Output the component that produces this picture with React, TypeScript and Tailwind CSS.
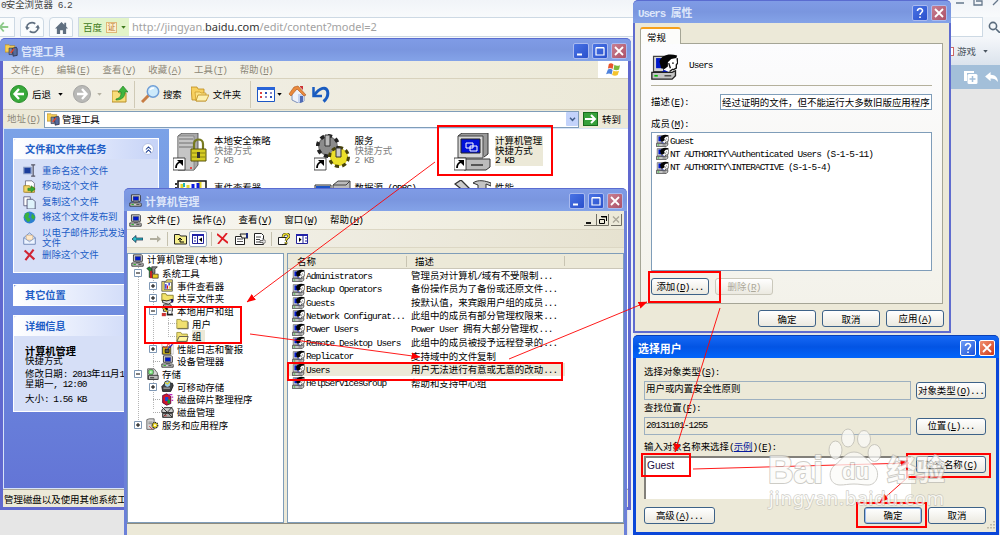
import React from "react";
import clsx from "clsx";

const CJK = "font-['Noto_Sans_CJK_SC',sans-serif]";

// Latin runs take half the width of a Chinese character, as in SimSun
function T({ s, k, className }: { s: string; k?: string; className?: string }) {
  const latin = "font-['Liberation_Mono','Noto_Sans_CJK_SC',monospace] tracking-[-0.1em]";
  return (
    <span className={clsx("whitespace-pre", className)}>
      {s.split(/([\u0020-\u00ff]+)/).map((p, i) =>
        i % 2 ? (
          <span key={i} className={latin}>
            {p}
          </span>
        ) : (
          p
        )
      )}
      {k && (
        <span className={latin}>
          (<u>{k}</u>)
        </span>
      )}
    </span>
  );
}

function Computer({ className }: { className?: string }) {
  return (
    <svg viewBox="0 0 16 16" className={className}>
      <path d="M3 1h10l1 1v7H3z" fill="#ddd" stroke="#222" strokeWidth="1" />
      <path d="M5 3h7v5H5z" fill="#0018c8" stroke="#555" strokeWidth=".6" />
      <path d="M6 9h5v2H6z" fill="#888" />
      <path d="M1 11h13l1 1v3H1z" fill="#ccc" stroke="#222" strokeWidth="1" />
      <path d="M3 13h3" stroke="#0a0" />
      <path d="M9 13h4" stroke="#333" />
    </svg>
  );
}

function Users({ className }: { className?: string }) {
  return (
    <svg viewBox="0 0 16 16" className={className}>
      <path d="M1.500 2h6v9h-6z" fill="#d5d5d5" stroke="#444" strokeWidth=".7" />
      <path d="M3 3h4v6H3z" fill="#0018c8" />
      <path d="M7 6l2-2 6-1 .5 3-1 3-2 .5L11 11H8z" fill="#fff" />
      <path d="M5 5c1-4 6-5 10.500-3.500L15 3l-3 .5-2 2v2.500L8 9.500 6 9z" fill="#050505" />
      <path d="M10.500 6l1 3M11 11l2-1.500M12.500 6h1M15.500 3l.3 3-.8 1v2l-2 1" stroke="#111" fill="none" strokeWidth=".8" />
      <path d="M5 12l3-2 4 2z" fill="#0018d0" />
      <path d="M.5 11.500h12l2-1v3l-2 2H.5z" fill="#c4c4c4" stroke="#222" strokeWidth=".8" />
      <path d="M2 13.500h2" stroke="#0b0" />
      <path d="M8 13.500h4" stroke="#444" strokeWidth=".8" />
    </svg>
  );
}

function Folder({ open, className }: { open?: boolean; className?: string }) {
  return (
    <svg viewBox="0 0 16 16" className={className}>
      <path d="M1 3h5l1 2h7v9H1z" fill="#f0e070" stroke="#9a9038" />
      {open ? (
        <path d="M4 8h11l-2 6H1z" fill="#fff6a0" stroke="#444" />
      ) : (
        <path d="M15 6v8.500H2" stroke="#444" strokeWidth=".9" fill="none" />
      )}
    </svg>
  );
}

function Mixed({ kind, className }: { kind: string; className?: string }) {
  return (
    <svg viewBox="0 0 16 16" className={className}>
      {kind === "tools" && (
        <>
          <path d="M1 3l3-2 3 2v11H4V6z" fill="#178a2a" stroke="#222" strokeWidth=".8" />
          <path d="M5 6h3v9H5z" fill="#c22" />
          <path d="M7 1h7l-3 3v5H8z" fill="#888" stroke="#111" strokeWidth=".8" />
          <path d="M8 10h7v5H8z" fill="#e6cc22" stroke="#222" strokeWidth=".8" />
        </>
      )}
      {kind === "event" && (
        <>
          <path d="M1 3h5l1-2h7v14H1z" fill="#f0df6a" stroke="#555" />
          <path d="M4 4h9v9H4z" fill="#fff" stroke="#222" strokeWidth=".7" />
          <path d="M6 6v6M10 5v3" stroke="#11c" strokeWidth="1.500" />
          <path d="M8 8v4" stroke="#d11" strokeWidth="1.500" />
          <path d="M11 9v3" stroke="#dc0" strokeWidth="1.500" />
        </>
      )}
      {kind === "share" && (
        <>
          <path d="M1 2h5l1 2h8v7H1z" fill="#f3e268" stroke="#7d7420" />
          <path d="M2 10l5 1 7-2v3l-5 3-7-2z" fill="#ddd" stroke="#111" />
          <path d="M12 9h3v4h-2z" fill="#116" />
        </>
      )}
      {kind === "local" && (
        <>
          <path d="M3 1h9l2 4v4H3z" fill="#ddd" stroke="#111" />
          <path d="M1 5l4-3 4 4-2 3z" fill="#111" />
          <path d="M2 4l8 8" stroke="#e8d020" strokeWidth="1.600" />
          <path d="M7 12c1-6 6-6 7-1l1 3H7z" fill="#222" />
          <path d="M9 8h4v4H9z" fill="#fff" />
          <path d="M1 11h5v4H1z" fill="#c33" />
        </>
      )}
      {kind === "perf" && (
        <>
          <path d="M1 2h14v13H1z" fill="#fff" stroke="#999" strokeWidth=".6" />
          <path d="M2 6h10v9H2z" fill="#e3c91c" stroke="#222" />
          <path d="M5 9h5v4H5z" fill="#555" stroke="#111" />
          <path d="M2 5l4 3 3-6 3 4 3-5" stroke="#d22" fill="none" />
          <path d="M8 9l6-6" stroke="#12c" strokeWidth="1.400" />
        </>
      )}
      {kind === "storage" && (
        <>
          <path d="M2 1h8l4 5v8H2z" fill="#d8d8d8" stroke="#555" />
          <circle cx="6" cy="5" r="3.500" fill="#7d7" stroke="#555" strokeWidth=".8" />
          <circle cx="6" cy="5" r="1" fill="#fff" />
          <path d="M3 9h12v5H3z" fill="#bbb" stroke="#222" />
          <path d="M5 12h5" stroke="#111" />
        </>
      )}
      {kind === "removable" && (
        <>
          <path d="M1 8l4-4h9l1 3-3 7H2z" fill="#444" stroke="#111" />
          <circle cx="8" cy="5" r="4" fill="#9ce" stroke="#222" />
          <path d="M5 3l3 2 3-3" stroke="#e3d020" strokeWidth="1.500" fill="none" />
          <path d="M3 10h8" stroke="#ddd" />
        </>
      )}
      {kind === "defrag" && (
        <>
          <path d="M2 3l5-2 5 3v9l-5 2-5-3z" fill="#d3152b" stroke="#503" />
          <path d="M5 5h4v5H5z" fill="#1747d8" />
          <path d="M8 8h3v5H8z" fill="#18a02a" />
          <path d="M11 2h3M13 5h2M13 9h2M10 1v2" stroke="#b2b" strokeWidth="1.500" />
        </>
      )}
      {kind === "disk" && (
        <>
          <path d="M1 5l3-3h9l2 3v3H1z" fill="#ccc" stroke="#111" />
          <path d="M2 9h12v5H2z" fill="#aaa" stroke="#111" />
          <path d="M1 1l13 13M14 1L3 13" stroke="#333" strokeWidth="1.200" />
          <path d="M4 12h3" stroke="#c22" />
        </>
      )}
      {kind === "service" && (
        <>
          <path d="M1 2l3-1h6v13H1z" fill="#d5d5d5" stroke="#555" />
          <path d="M3 5h5M3 7h5" stroke="#777" />
          <circle cx="11" cy="9" r="3.500" fill="#e8d41c" stroke="#222" strokeDasharray="1.500 .8" strokeWidth="1.500" />
          <circle cx="11" cy="9" r="1.200" fill="#fff" />
          <path d="M4 10l4 4" stroke="#c22" />
        </>
      )}
    </svg>
  );
}

function AdminIcon({ className }: { className?: string }) {
  return (
    <svg viewBox="0 0 16 16" className={className}>
      <path d="M0 1h5l1 1h6v8H0z" fill="#f6cf55" stroke="#a77c1c" strokeWidth=".7" />
      <path d="M5 5h4v8H5z" fill="#7b87a8" stroke="#334" strokeWidth=".8" />
      <path d="M9 5l5-1 1 2v8l-5 1z" fill="#556a9c" stroke="#223" strokeWidth=".8" />
      <path d="M7 11l4-5" stroke="#e5482c" strokeWidth="1.800" />
    </svg>
  );
}

function CaptionButton({ kind, active }: { kind: "min" | "max" | "help" | "close"; active?: boolean }) {
  return (
    <span
      className={clsx(
        "flex h-[16px] w-[16px] items-center justify-center rounded-[2px] border",
        active ? "border-white" : "border-[#a9baf0]",
        kind === "close"
          ? active
            ? "bg-linear-to-br from-[#f0906f] to-[#cf3510]"
            : "bg-linear-to-br from-[#c87f91] to-[#ac5168]"
          : active
            ? "bg-linear-to-br from-[#6f9cf5] to-[#1b50d8]"
            : "bg-linear-to-br from-[#4a73e4] to-[#2a50cc]"
      )}
    >
      <svg viewBox="0 0 14 14" className="h-[14px] w-[14px]" fill="none" stroke="#fff">
        {kind === "min" && <path d="M3 10.500h5" strokeWidth="2" />}
        {kind === "max" && <path d="M3 4h8v7H3zM3 3.500h8" strokeWidth="1.200" />}
        {kind === "close" && <path d="M3 3l8 8M11 3l-8 8" strokeWidth="1.800" />}
        {kind === "help" && (
          <path d="M4.500 5c0-3.500 5.300-3 5 0C9.300 6.500 7 6.700 7 9M7 10.500v1.500" strokeWidth="1.600" />
        )}
      </svg>
    </span>
  );
}

function TitleBar({
  title,
  icon,
  buttons,
  active,
}: {
  title: string;
  icon?: React.ReactNode;
  buttons: ("min" | "max" | "help" | "close")[];
  active?: boolean;
}) {
  return (
    <div
      className={clsx(
        "flex h-[23px] shrink-0 items-center rounded-t-[5px] border-t pt-px pr-[4px] pl-[5px]",
        active
          ? "border-[#0840b8] bg-linear-to-b from-[#1668f4] via-[#0354e4] to-[#0265fb]"
          : "border-[#5a6cd0] bg-linear-to-b from-[#7f9be6] via-[#7a96df] to-[#84a3e8]"
      )}
    >
      {icon}
      <T
        s={title}
        className={clsx("text-[10.900px] font-bold", active ? "text-white" : "text-[#dde6fa]")}
      />
      <div className="ml-auto flex gap-[3px]">
        {buttons.map((b) => (
          <CaptionButton key={b} kind={b} active={active} />
        ))}
      </div>
    </div>
  );
}

function Btn({ s, k, tail, className }: { s: string; k?: string; tail?: string; className?: string }) {
  return (
    <div
      className={clsx(
        "flex h-[17px] shrink-0 items-center justify-center rounded-[3px] border bg-linear-to-b from-white to-[#ebe9e0]",
        className?.includes("border-") ? "" : "border-[#3d6288]",
        className
      )}
    >
      <T s={s} k={k} />
      {tail && <T s={tail} />}
    </div>
  );
}

function Caret({ className }: { className?: string }) {
  return (
    <svg viewBox="0 0 6 4" className={clsx("h-[3px] w-[5px]", className)}>
      <path d="M0 0h6L3 3.500z" fill="currentColor" />
    </svg>
  );
}

function Browser() {
  return (
    <div className="flex h-full flex-col bg-[#e6e6e6]">
      <div className="h-[17px] bg-linear-to-b from-[#f1f4f8] to-[#f8fafc] leading-[9px] text-[#444]">
        <div className="flex justify-between">
          <T s="0安全浏览器 6.2" className="pl-px" />
          <svg viewBox="0 0 44 10" className="h-[10px] w-[44px]" fill="none" stroke="#66788c" strokeWidth="1.300">
            <path d="M0 3h8M20 1h6v4h-8V0M42 0l-5 5" />
          </svg>
        </div>
      </div>
      <div className="flex h-[20px] items-center bg-[#f4f7fa] text-[#5f6f80]">
        <div className="flex h-full w-[15px] items-center border border-l-0 border-[#cdd9e4] bg-[#fafcfd]">
          <svg viewBox="0 0 12 14" className="h-[12px] w-[9px]" fill="none" stroke="#8dc98a" strokeWidth="2.500">
            <path d="M5 1L0 7l5 6M0 7h11" />
          </svg>
        </div>
        <div className="ml-[5px] flex h-full w-[24px] items-center justify-center rounded-t border border-[#cdd9e4] bg-[#fafcfd]">
          <svg viewBox="0 0 16 14" className="h-[13px] w-[15px]" fill="none" stroke="currentColor" strokeWidth="1.800">
            <path d="M2 8C1 3 7 0 11 3M14 6c1 5-5 8-9 5" />
            <path d="M0 6l2 4 3-3zM16 8l-2-4-3 3z" fill="currentColor" stroke="none" />
          </svg>
        </div>
        <div className="ml-[5px] flex h-full w-[24px] items-center justify-center rounded-t border border-[#cdd9e4] bg-[#fafcfd]">
          <svg viewBox="0 0 14 14" className="h-[13px] w-[13px]" fill="currentColor">
            <path d="M7 1L0 8h2v6h3.500v-4h3v4H12V8h2l-2-2V2h-2v2z" />
          </svg>
        </div>
        <div className="ml-[5px] flex h-full flex-1 items-center border border-[#cdd9e4] bg-white">
          <div className="flex h-full w-[50px] items-center bg-[#e3f4c9] pl-[4px] text-[9.500px] text-[#3f7a1c]">
            百度
            <span className="ml-[4px] flex h-[11px] w-[11px] items-center justify-center border border-[#e0b878] bg-[#fdf0cf] text-[8px] text-[#b8732c]">
              证
            </span>
            <Caret className="ml-[4px]" />
          </div>
          <div className="pl-[3px] font-['Noto_Sans'] text-[11px] tracking-[-0.020px] whitespace-pre text-[#a2a2a2]">
            http://jingyan.<span className="text-[#333]">baidu.com</span>/edit/content?model=2
          </div>
        </div>
        <div className="flex h-full w-[17px] items-center pl-[5px]">
          <svg viewBox="0 0 12 12" className="h-[12px] w-[12px]" fill="none" stroke="#596b7d" strokeWidth="1.600">
            <circle cx="5" cy="5" r="3.600" />
            <path d="M8 8l4 4" />
          </svg>
        </div>
      </div>
      <div className="flex h-[28px] items-center justify-end bg-linear-to-b from-[#f5f7fa] to-[#dbe3ec] pr-[12px] text-[9.500px] text-[#4b5560]">
        <span className="mr-[3px] h-[9px] w-[6px] border border-[#c66] bg-white" />
        游戏
        <Caret className="ml-[7px]" />
      </div>
      <div className="flex h-[24px] items-center justify-end gap-[7px] bg-[#a3bfd9] pr-[2px]">
        <svg viewBox="0 0 14 13" className="h-[13px] w-[14px]">
          <path d="M0 0h10v2H3v8H0z" fill="#fff" />
          <rect x="3.500" y="3" width="10" height="10" rx="1.500" fill="#fff" />
          <path d="M8.500 5v6M5.500 8h6" stroke="#a3bfd9" strokeWidth="1.500" />
        </svg>
        <svg viewBox="0 0 14 12" className="h-[11px] w-[13px]" fill="#fff">
          <path d="M6 0v3c5 0 8 3 8 8-2-3-4-4-8-4v3L0 5z" />
        </svg>
      </div>
    </div>
  );
}

const TASKS: [string, string][] = [
  ["rename", "重命名这个文件"],
  ["move", "移动这个文件"],
  ["copy", "复制这个文件"],
  ["web", "将这个文件发布到 “Web”"],
  ["mail", "以电子邮件形式发送此\n文件"],
  ["delete", "删除这个文件"],
];

function TaskIcon({ kind }: { kind: string }) {
  return (
    <svg viewBox="0 0 16 16" className="h-[13px] w-[13px] shrink-0">
      {kind === "rename" && (
        <>
          <path d="M1 4h9v8H1z" fill="#1b3d9c" stroke="#8a9cc4" strokeWidth="1.500" />
          <path d="M10 1h5M12.500 1v14M10 15h5" stroke="#556" fill="none" strokeWidth="1.500" />
        </>
      )}
      {kind === "move" && (
        <>
          <path d="M3 1h8l3 3v11H3z" fill="#fff" stroke="#667" />
          <path d="M1 7h7l1 2h5v6H1z" fill="#f3d569" stroke="#a88420" />
          <path d="M6 10h4V7l5 4-5 4v-2H6z" fill="#35a935" stroke="#176b17" strokeWidth=".6" />
        </>
      )}
      {kind === "copy" && (
        <>
          <path d="M1 1h8v11H1z" fill="#fff" stroke="#557" />
          <path d="M5 4h7l3 3v9H5z" fill="#dff2fb" stroke="#446" />
        </>
      )}
      {kind === "web" && (
        <>
          <circle cx="8" cy="8" r="7.300" fill="#2c7fd0" />
          <path d="M3 3c4-3 6 0 4 3s3 2 2 5-4 3-5 0-4-2-1-8zM11 3l4 4-2 4-3-3z" fill="#3ab23c" />
        </>
      )}
      {kind === "mail" && (
        <>
          <path d="M1 7l7-6 7 6v8H1z" fill="#cfe0f7" stroke="#6b84b5" />
          <path d="M4 4h8v6H4z" fill="#ffe9c9" stroke="#c79a62" strokeWidth=".6" />
          <path d="M1 7l7 5 7-5v8H1z" fill="#edf4ff" stroke="#6b84b5" strokeWidth=".8" />
        </>
      )}
      {kind === "delete" && <path d="M2 3l12 11M13 2L3 15" stroke="#d02434" strokeWidth="2.600" />}
    </svg>
  );
}

function PanelHeader({ title, chevron }: { title: string; chevron?: boolean }) {
  return (
    <div className="flex h-[20px] items-center rounded-t-[3px] bg-linear-to-r from-white to-[#c6d3f7] pr-[4px] pl-[11px] text-[10.200px] font-bold text-[#215dc6]">
      {title}
      {chevron && (
        <span className="ml-auto flex h-[12px] w-[12px] items-center justify-center rounded-full border border-[#b7c3e4] bg-white">
          <svg viewBox="0 0 8 8" className="h-[7px] w-[7px]" fill="none" stroke="#1c3f94" strokeWidth="1.200">
            <path d="M1 4l3-3 3 3M1 7.500l3-3 3 3" />
          </svg>
        </span>
      )}
    </div>
  );
}

function Tile({ icon, name, selected }: { icon: React.ReactNode; name: string; selected?: boolean }) {
  return (
    <div className="flex h-[47px] w-[140.500px] items-start">
      <span className="mt-[1px] h-[40px] w-[37px]">{icon}</span>
      <div className={clsx("mt-[4px] ml-[4px] flex flex-col leading-[9.600px]", selected && "bg-[#ece9d8] pr-px")}>
        <T s={name} />
        <T s="快捷方式" className={selected ? "" : "text-[#808080]"} />
        <T s="2 KB" className={selected ? "" : "text-[#808080]"} />
      </div>
    </div>
  );
}

function Shortcut() {
  return (
    <>
      <path d="M0 25h12v12H0z" fill="#fff" stroke="#222" strokeWidth=".8" />
      <path d="M3 35c0-3 1-5 4-6" stroke="#000" strokeWidth="1.800" fill="none" />
      <path d="M4 27h6v6z" fill="#000" />
    </>
  );
}

function TileIcon({ kind }: { kind: string }) {
  return (
    <svg viewBox="0 0 37 38" className="h-[38px] w-[37px]">
      {kind === "policy" && (
        <>
          <path d="M5 3l4-3h16v32l-4 5H5z" fill="#a9a9a9" stroke="#444" strokeWidth=".8" />
          <path d="M5 3h16v34H5z" fill="#c5c5c5" stroke="#777" strokeWidth=".7" />
          <path d="M6 6h14M6 10h14M6 14h14" stroke="#707070" />
          <path d="M21 17v-6c0-6 9-6 9 0v6" stroke="#777a20" strokeWidth="2.200" fill="none" />
          <path d="M18 16h15v12H18z" fill="#d6cc24" stroke="#57520b" />
          <path d="M19 20h13M19 24h13" stroke="#8b8412" />
          <path d="M24 19h3v6h-3z" fill="#333" />
          <circle cx="18" cy="35" r="1" fill="#e22" />
        </>
      )}
      {kind === "services" && (
        <>
          <circle cx="14" cy="13" r="10" fill="#777" stroke="#222" strokeWidth="4" strokeDasharray="4 3.800" />
          <circle cx="14" cy="13" r="8.500" fill="#8c8c8c" />
          <path d="M11 2h5v11h-5z" fill="#bbb" stroke="#333" />
          <circle cx="25" cy="24" r="9" fill="#ddcf20" stroke="#47420a" strokeWidth="4" strokeDasharray="4 3" />
          <circle cx="25" cy="24" r="8" fill="#ece02a" />
          <path d="M22 15h5v9h-5z" fill="#ccc" stroke="#333" />
        </>
      )}
      {kind === "manage" && (
        <>
          <path d="M4 3l4-3h26v21l-4 3" fill="#999" stroke="#333" />
          <path d="M4 3h25v22H4z" fill="#d5d5d5" stroke="#444" />
          <path d="M7 6h19v14H7z" fill="#0010d8" stroke="#222" />
          <path d="M12 10h7v5h-7zM16 13h7v5h-7z" fill="#0010d8" stroke="#fff" />
          <path d="M4 29l4-3h28v8l-4 3H10z" fill="#bbb" stroke="#333" />
          <path d="M17 32h12" stroke="#333" strokeWidth="1.500" />
        </>
      )}
      {kind === "event" && (
        <>
          <path d="M5 1h28v20H5z" fill="#fffdf0" stroke="#111" strokeWidth="1.500" />
          <path d="M9 4v4M15 5v6M27 2v8" stroke="#e6d62a" strokeWidth="3" />
          <path d="M20 4v5M25 3v5" stroke="#0a1ae0" strokeWidth="3" />
          <path d="M3 3v12" stroke="#333" strokeDasharray="2 2" strokeWidth="2" />
          <path d="M11 3v4" stroke="#20b5b5" strokeWidth="2" />
        </>
      )}
      {kind === "odbc" && (
        <>
          <path d="M1 5h16v9H1z" fill="#e4e4e4" stroke="#333" />
          <path d="M2 6h14v2H2z" fill="#1b53c4" />
          <path d="M19 5l5-4h12v11H19z" fill="#bbb" stroke="#444" />
          <path d="M19 5h13l4-4" stroke="#444" fill="none" />
        </>
      )}
      {kind === "perf" && (
        <>
          <path d="M1 4l6-4 8 8-4 4z" fill="#ccc" stroke="#333" strokeWidth="1.300" />
          <path d="M19 3c5-4 13-2 18 0v3l-5-2v8h-8V5z" fill="#c4c4c4" stroke="#333" />
        </>
      )}
      {["policy", "services", "manage"].includes(kind) && <Shortcut />}
    </svg>
  );
}

function AdminTools() {
  const menus: [string, string][] = [
    ["文件", "F"],
    ["编辑", "E"],
    ["查看", "V"],
    ["收藏", "A"],
    ["工具", "T"],
    ["帮助", "H"],
  ];
  return (
    <div className="absolute top-[38px] left-0 flex h-[472px] w-[631px] flex-col rounded-t-[6px] bg-[#6068cf]">
      <TitleBar
        title="管理工具"
        icon={<AdminIcon className="mr-[3px] h-[13px] w-[13px]" />}
        buttons={["min", "max", "close"]}
      />
      <div className="mx-[3px] flex h-[446px] flex-col bg-[#ece9d8]">
        <div className="flex h-[18px] items-center gap-[12.700px] border-b border-[#d8d2bd] bg-linear-to-r from-[#f5f4ee] to-[#ece9d8] pl-[8px] text-[#8d8878]">
          {menus.map(([s, k]) => (
            <T key={s} s={s} k={k} />
          ))}
          <div className="ml-auto flex h-[17px] w-[30px] items-center justify-center bg-white">
            <svg viewBox="0 0 16 14" className="h-[13px] w-[15px]">
              <path d="M3 1c2-1 3-1 5 .5L7 6.500C5 5 4 5 2 6z" fill="#e8542c" />
              <path d="M9 2c2 1.500 4 1 6 .3L14 7c-2 1-4 1-6 0z" fill="#7cb83c" />
              <path d="M2 7c2-1 3-1 5 .5l-1 5C4 11 3 11 0 12z" fill="#4e82dc" />
              <path d="M8 8c2 1.500 4 1 6 .3L12.500 13c-2 1-4 1-6 0z" fill="#f5c32c" />
            </svg>
          </div>
        </div>
        <div className="flex h-[31px] items-center border-b border-[#d8d2bd] bg-linear-to-r from-[#f2f0e8] to-[#ece9d8] pl-[7px]">
          <svg viewBox="0 0 18 18" className="h-[18px] w-[18px]">
            <circle cx="9" cy="9" r="8.500" fill="#38a93a" stroke="#2b8e2e" />
            <path d="M9 4L4.500 9 9 14M5 9h9" stroke="#fff" strokeWidth="2.300" fill="none" />
          </svg>
          <T s="后退" className="ml-[4px]" />
          <Caret className="ml-[7px]" />
          <svg viewBox="0 0 18 18" className="ml-[10px] h-[18px] w-[18px]">
            <circle cx="9" cy="9" r="8.500" fill="#b9b9b7" stroke="#a5a5a3" />
            <path d="M9 4l4.500 5L9 14M13 9H4" stroke="#fff" strokeWidth="2.300" fill="none" />
          </svg>
          <Caret className="ml-[6px] text-[#b5b1a2]" />
          <svg viewBox="0 0 16 17" className="ml-[10px] h-[17px] w-[16px]">
            <path d="M0 5h6l1 2h7v9H0z" fill="#f8dd79" stroke="#b98e28" />
            <path d="M4 13c4-1 5-3 5-7H6l5-6 5 6h-3c0 5-3 8-9 8z" fill="#3fb53f" stroke="#1c7a1c" strokeWidth=".6" />
          </svg>
          <span className="ml-[6px] h-[27px] w-px bg-[#cfcab6]" />
          <svg viewBox="0 0 19 18" className="ml-[6px] h-[18px] w-[19px]">
            <path d="M1 17l7-7" stroke="#c77d45" strokeWidth="3" />
            <circle cx="12" cy="6.500" r="5.700" fill="#cdeafb" stroke="#6f9ed6" strokeWidth="1.500" />
            <path d="M9 5c1-2 3-2 4-2" stroke="#fff" strokeWidth="1.500" fill="none" />
          </svg>
          <T s="搜索" className="ml-[3px]" />
          <svg viewBox="0 0 18 16" className="ml-[9px] h-[16px] w-[18px]">
            <path d="M0 1h6l1 2h6v11H1z" fill="#f7d05f" stroke="#bd8c1c" strokeWidth=".8" />
            <path d="M4 6h5l1 1h5v8H5z" fill="#fbe183" stroke="#bd8c1c" strokeWidth=".6" />
            <path d="M7 9h11l-3 6H5z" fill="#fdf0b0" stroke="#bd8c1c" strokeWidth=".8" />
          </svg>
          <T s="文件夹" className="ml-[4px]" />
          <span className="ml-[9px] h-[27px] w-px bg-[#cfcab6]" />
          <svg viewBox="0 0 18 15" className="ml-[6px] h-[15px] w-[18px]">
            <path d="M.5.500h17v14H.5z" fill="#fff" stroke="#1c57c4" />
            <path d="M0 0h18v3H0z" fill="#2864d8" />
            <path d="M3 6h2M3 10h2" stroke="#d44" strokeWidth="2" />
            <path d="M8 6h2M13 10h2" stroke="#2b51b8" strokeWidth="2" />
            <path d="M8 10h2M13 6h2" stroke="#8a8ac8" strokeWidth="2" />
          </svg>
          <Caret className="ml-[2px]" />
          <svg viewBox="0 0 19 18" className="ml-[6px] h-[18px] w-[19px]">
            <path d="M4 7l6-4 6 7v6l-6 2-6-3z" fill="#eef2fb" stroke="#7d8fb8" />
            <path d="M10 18V9l6 0v7z" fill="#c3d2f0" />
            <path d="M1 9l5-7 4-1 8 9-2 1-7-7-6 7z" fill="#ea8a3c" stroke="#a9541b" strokeWidth=".6" />
            <path d="M12 11h3v6l-3 1z" fill="#4f6cb5" />
            <path d="M12 1h3v4l-3-3z" fill="#c33" />
          </svg>
          <svg viewBox="0 0 18 17" className="ml-[5px] h-[17px] w-[18px]">
            <path d="M1.500 1v9H10" stroke="#1a5cc0" strokeWidth="2.500" fill="none" />
            <path d="M2 9.500C8 1 14 .5 15.500 5c1 4-1 8-4 10.500" stroke="#1a5cc0" strokeWidth="3" fill="none" />
          </svg>
        </div>
        <div className="flex h-[18px] items-center text-[#8d8878]">
          <T s="地址" k="D" className="w-[41px] pl-[4px]" />
          <div className="flex h-[17px] w-[535px] items-center border border-[#7f9db9] bg-white pl-[2px] text-black">
            <AdminIcon className="h-[13px] w-[13px]" />
            <T s="管理工具" className="ml-[2px]" />
            <span className="ml-auto flex h-[14px] w-[12px] items-center justify-center rounded-[1px] bg-[#c3d3fb]">
              <svg viewBox="0 0 8 6" className="h-[5px] w-[7px]" fill="none" stroke="#44608c" strokeWidth="1.800">
                <path d="M1 1l3 3 3-3" />
              </svg>
            </span>
          </div>
          <span className="ml-[4px] flex h-[14px] w-[15px] items-center justify-center border border-[#176c1b] bg-[#36a03a]">
            <svg viewBox="0 0 12 10" className="h-[10px] w-[12px]" fill="none" stroke="#fff" strokeWidth="2">
              <path d="M0 5h10M6 1l4 4-4 4" />
            </svg>
          </span>
          <T s="转到" className="ml-[4px] text-black" />
        </div>
        <div className="flex h-[361px] border border-r-0 border-[#d8e4f8] bg-white">
          <div className="w-[165px] overflow-hidden bg-linear-to-b from-[#7ba2e7] to-[#6375d6] pt-[9px] pl-[9px]">
            <div className="h-[135px] w-[146px] border border-white bg-[#d6dff7]">
              <PanelHeader title="文件和文件夹任务" chevron />
              <div className="flex flex-col gap-[2.800px] pt-[5px] pl-[9px] leading-[9.800px] whitespace-pre text-[#215dc6]">
                {TASKS.map(([kind, s]) => (
                  <div
                    key={kind}
                    className={clsx("flex items-center", kind === "mail" && "h-[22px]", kind === "delete" && "-mt-[4px]")}
                  >
                    <TaskIcon kind={kind} />
                    <T s={s} className="ml-[6px]" />
                  </div>
                ))}
              </div>
            </div>
            <div className="mt-[11px] w-[146px] border border-white">
              <PanelHeader title="其它位置" />
            </div>
            <div className="mt-[9px] h-[97px] w-[146px] border border-white bg-[#d6dff7]">
              <PanelHeader title="详细信息" />
              <div className="flex flex-col pt-[9px] pl-[11px] leading-[9.600px]">
                <T s="计算机管理" className="text-[10.200px] leading-[11px] font-bold" />
                <T s="快捷方式" />
                <T s={"修改日期: 2013年11月1日,\n星期一, 12:00"} className="mt-[3px]" />
                <T s="大小: 1.56 KB" className="mt-[4px]" />
              </div>
            </div>
          </div>
          <div className="flex flex-1 flex-wrap content-start pt-[3px] pl-[4px]">
            <Tile icon={<TileIcon kind="policy" />} name="本地安全策略" />
            <Tile icon={<TileIcon kind="services" />} name="服务" />
            <Tile icon={<TileIcon kind="manage" />} name="计算机管理" selected />
            <Tile icon={<TileIcon kind="event" />} name="事件查看器" />
            <Tile icon={<TileIcon kind="odbc" />} name="数据源 (ODBC)" />
            <Tile icon={<TileIcon kind="perf" />} name="性能" />
          </div>
        </div>
        <div className="flex flex-1 items-center border-t border-[#aca899] pl-px">
          <T s="管理磁盘以及使用其他系统工具" />
        </div>
      </div>
    </div>
  );
}

const TREE: { depth: number; s: string; icon: string; box?: string; sel?: boolean }[] = [
  { depth: 0, s: "计算机管理(本地)", icon: "computer" },
  { depth: 1, s: "系统工具", icon: "tools", box: "-" },
  { depth: 2, s: "事件查看器", icon: "event", box: "+" },
  { depth: 2, s: "共享文件夹", icon: "share", box: "+" },
  { depth: 2, s: "本地用户和组", icon: "local", box: "-" },
  { depth: 3, s: "用户", icon: "folder" },
  { depth: 3, s: "组", icon: "open", sel: true },
  { depth: 2, s: "性能日志和警报", icon: "perf", box: "+" },
  { depth: 2, s: "设备管理器", icon: "computer" },
  { depth: 1, s: "存储", icon: "storage", box: "-" },
  { depth: 2, s: "可移动存储", icon: "removable", box: "+" },
  { depth: 2, s: "磁盘碎片整理程序", icon: "defrag" },
  { depth: 2, s: "磁盘管理", icon: "disk" },
  { depth: 1, s: "服务和应用程序", icon: "service", box: "+" },
];

const GROUPS: [string, string][] = [
  ["Administrators", "管理员对计算机/域有不受限制..."],
  ["Backup Operators", "备份操作员为了备份或还原文件..."],
  ["Guests", "按默认值，来宾跟用户组的成员..."],
  ["Network Configurat...", "此组中的成员有部分管理权限来..."],
  ["Power Users", "Power User 拥有大部分管理权..."],
  ["Remote Desktop Users", "此组中的成员被授予远程登录的..."],
  ["Replicator", "支持域中的文件复制"],
  ["Users", "用户无法进行有意或无意的改动..."],
  ["HelpServicesGroup", "帮助和支持中心组"],
];

function TreeRow({ depth, s, icon, box, sel }: (typeof TREE)[number]) {
  const cls = "h-[13px] w-[13px] shrink-0";
  return (
    <div
      className={clsx(
        "flex h-[12.650px] items-center",
        depth === 0 && "pl-[3px]",
        depth === 1 && "pl-[6px]",
        depth === 2 && "pl-[21px]",
        depth === 3 && "pl-[38px]"
      )}
    >
      {depth > 0 && depth < 3 && (
        <span className="flex w-[12px] shrink-0 items-center">
          {box ? (
            <svg viewBox="0 0 8 8" className="h-[8px] w-[8px]">
              <path d="M.5.500h7v7h-7z" fill="#fff" stroke="#7f98b5" />
              <path d={box === "+" ? "M2 4h4M4 2v4" : "M2 4h4"} stroke="#000" />
            </svg>
          ) : (
            <span className="ml-[4px] w-[7px] border-t border-dotted border-[#aaa]" />
          )}
        </span>
      )}
      {icon === "computer" ? (
        <Computer className={cls} />
      ) : icon === "folder" || icon === "open" ? (
        <Folder open={icon === "open"} className={clsx(cls, "ml-[10px]")} />
      ) : (
        <Mixed kind={icon} className={cls} />
      )}
      <T s={s} className={clsx("ml-[3px]", sel && "-my-px bg-[#ece9d8] pr-[4px]")} />
    </div>
  );
}

function ComputerManagement() {
  const menus: [string, string][] = [
    ["文件", "F"],
    ["操作", "A"],
    ["查看", "V"],
    ["窗口", "W"],
    ["帮助", "H"],
  ];
  return (
    <div className="absolute top-[188px] left-[124px] flex h-[360px] w-[503px] flex-col rounded-t-[6px] bg-[#6b80d8]">
      <TitleBar
        title="计算机管理"
        icon={<Computer className="mr-[3px] h-[13px] w-[13px]" />}
        buttons={["min", "max", "close"]}
      />
      <div className="mx-[3px] flex flex-1 flex-col bg-[#ece9d8]">
        <div className="flex h-[19px] items-center border-b border-[#dcd7c4] bg-linear-to-r from-[#f8f7f2] to-[#ece9d8] pr-[2px] pl-[2px]">
          <Computer className="mr-[5px] h-[13px] w-[13px]" />
          <div className="flex gap-[12.700px]">
            {menus.map(([s, k]) => (
              <T key={s} s={s} k={k} />
            ))}
          </div>
          <div className="ml-auto flex h-[12px]">
            <svg viewBox="0 0 38 12" className="h-[12px] w-[38px]">
              <path d="M0 11.500h24.500V0M12.500 0v11M37.500 0v11.500H27" stroke="#716f64" fill="none" />
              <path d="M2 9h5" stroke="#000" strokeWidth="1.800" />
              <path d="M15.500 5.500h5v4h-5zM17.500 3h5v4M17 2.500h6" stroke="#000" fill="none" />
              <path d="M29 2.500l6 6M35 2.500l-6 6" stroke="#aaa798" strokeWidth="1.300" />
            </svg>
          </div>
        </div>
        <div className="flex h-[18px] items-center border-b border-[#dcd7c4] bg-linear-to-r from-[#f5f4ee] to-[#e6e2d0] pl-[5px]">
          <svg viewBox="0 0 11 8" className="h-[8px] w-[11px]">
            <path d="M0 4l4-3.500v2.500h7v2H4v2.500z" fill="#2dc0c8" stroke="#124" strokeWidth=".7" />
          </svg>
          <svg viewBox="0 0 11 8" className="ml-[7px] h-[8px] w-[11px]">
            <path d="M11 4L7 .5V3H0v2h7v2.500z" fill="#b1ae9e" />
          </svg>
          <span className="mr-[6px] ml-[6px] h-[14px] w-px bg-[#c5c1ae]" />
          <svg viewBox="0 0 13 12" className="h-[12px] w-[13px]">
            <path d="M.5 1.500h5l1 1.500h6v8H.5z" fill="#f6ef8c" stroke="#222" />
            <path d="M4 7l2-2 2 2M6 5v4h4" stroke="#000" fill="none" />
          </svg>
          <span className="ml-[2px] flex h-[16px] w-[18px] items-center justify-center rounded-[2px] border border-[#98a9c0] bg-white">
            <svg viewBox="0 0 12 10" className="h-[10px] w-[12px]">
              <path d="M.5.500h11v9H.5z" fill="#fff" stroke="#229" />
              <path d="M0 0h12v2H0z" fill="#22a" />
              <path d="M5.500 0v10M2 4h2M2 7h2" stroke="#229" />
              <path d="M10 3.500L7 5.500 10 8z" fill="#000" />
            </svg>
          </span>
          <span className="mr-[5px] ml-[4px] h-[14px] w-px bg-[#c5c1ae]" />
          <svg viewBox="0 0 11 11" className="h-[11px] w-[11px]" stroke="#e01c24" strokeWidth="1.800">
            <path d="M0 1l11 9M10 0L1 11" />
          </svg>
          <svg viewBox="0 0 13 12" className="ml-[7px] h-[12px] w-[13px]">
            <path d="M.5 3.500h9v8h-9z" fill="#fff" stroke="#222" />
            <path d="M2 6h6M2 8.500h6" stroke="#555" />
            <path d="M5 1h8v4H7z" fill="#f5f0e0" stroke="#222" />
            <path d="M11 0h2v5h-2z" fill="#1a2a80" />
          </svg>
          <svg viewBox="0 0 12 12" className="ml-[6px] h-[12px] w-[12px]">
            <path d="M.5.500h7l2 2v9h-9z" fill="#fff" stroke="#222" />
            <path d="M2 4h5M2 6.500h4M2 9h4" stroke="#444" />
            <path d="M6 7.500h3V5.500l3 3-3 3v-2H6z" fill="#ddd" stroke="#222" strokeWidth=".6" />
          </svg>
          <span className="mr-[6px] ml-[5px] h-[14px] w-px bg-[#c5c1ae]" />
          <svg viewBox="0 0 12 12" className="h-[12px] w-[12px]">
            <path d="M.5 4.500h8v7h-8z" fill="#fff" stroke="#222" />
            <path d="M5 4c0-4 6-4 6-1 0 2-3 2-3 4.500M8 9v2" stroke="#222" strokeWidth="2.600" fill="none" />
            <path d="M5 4c0-4 6-4 6-1 0 2-3 2-3 4.500M8 9v1.500" stroke="#f3e428" strokeWidth="1.500" fill="none" />
          </svg>
          <svg viewBox="0 0 12 10" className="ml-[6px] h-[10px] w-[12px]">
            <path d="M.5.500h11v9H.5z" fill="#fff" stroke="#229" />
            <path d="M0 0h12v2H0z" fill="#22a" />
            <path d="M7 0v10M9 4h2M9 7h2" stroke="#229" />
            <path d="M3 3.500l2.500 2L3 8z" fill="#000" />
          </svg>
        </div>
        <div className="mt-[5px] flex h-[271px] gap-[3px] border-b border-[#8d8b7e]">
          <div className="relative w-[157px] border border-[#7f9db9] bg-white">
            <svg
              viewBox="0 0 60 176"
              className="absolute top-0 left-0 h-[176px] w-[60px]"
              stroke="#b5b5b5"
              strokeDasharray="1 1"
              fill="none"
            >
              <path d="M10.500 13v156M25.500 26v130M40.500 64v18M40 69.500h9M40 82.500h9" />
            </svg>
            <div className="relative">
              {TREE.map((r) => (
                <TreeRow key={r.s} {...r} />
              ))}
            </div>
          </div>
          <div className="flex-1 border border-[#7f9db9] bg-white">
            <div className="flex h-[15px] items-center border-b border-[#cbc7b8] bg-[#ece9d8] pl-[9px]">
              <T s="名称" className="w-[109px]" />
              <T s="描述" className="h-[11px] w-[158px] border-l border-[#c8c4b2] pl-[8px] leading-[11px]" />
              <span className="h-[10px] w-px bg-[#c8c4b2]" />
            </div>
            <div>
              {GROUPS.map(([name, desc]) => (
                <div
                  key={name}
                  className={clsx("flex h-[13.420px] items-center pl-[4px]", name === "Users" && "mr-[58px] bg-[#ece9d8]")}
                >
                  <Users className="h-[13px] w-[13px]" />
                  <T s={name} className="ml-[1px] w-[105px]" />
                  <T s={desc} />
                </div>
              ))}
            </div>
          </div>
        </div>
      </div>
    </div>
  );
}

function UsersDialog() {
  return (
    <div className="absolute top-0 left-[633px] flex h-[333px] w-[318px] flex-col rounded-t-[6px] bg-[#5f6ccf]">
      <TitleBar title="Users 属性" buttons={["help", "close"]} />
      <div className="mx-[2px] flex h-[308px] flex-col bg-[#ece9d8] px-[5px] pt-[4px]">
        <div className="z-10 -mb-px flex h-[17px] w-[41px] items-center rounded-t-[3px] border border-t-2 border-b-0 border-[#a5a596] border-t-[#f6a01c] bg-[#fcfcfa] pl-[6px]">
          常规
        </div>
        <div className="flex h-[261px] w-[303px] flex-col border border-[#a5a596] bg-linear-to-b from-[#fcfcfe] to-[#f3f2ea] px-[10px] pt-[9px]">
          <div className="flex items-center">
            <Users className="h-[27px] w-[27px]" />
            <T s="Users" className="mb-[3px] ml-[11px]" />
          </div>
          <div className="mt-[5px] border-t border-[#b4b09c]" />
          <div className="mt-[8px] flex items-center">
            <span className="w-[69px]">
              <T s="描述" k="E" />
              <T s=":" />
            </span>
            <div className="flex h-[16px] flex-1 items-center overflow-hidden border border-[#7f9db9] bg-white pb-px pl-px">
              <T s="经过证明的文件，但不能运行大多数旧版应用程序" />
            </div>
          </div>
          <div className="mt-[6px] leading-[14px]">
            <T s="成员" k="M" />
            <T s=":" />
          </div>
          <div className="h-[139px] border border-[#7f9db9] bg-white pt-[1px] pl-[4px]">
            {["Guest", "NT AUTHORITY\\Authenticated Users (S-1-5-11)", "NT AUTHORITY\\INTERACTIVE (S-1-5-4)"].map((s) => (
              <div key={s} className="flex h-[13.300px] items-center">
                <Users className="h-[13px] w-[13px]" />
                <T s={s} className="ml-px" />
              </div>
            ))}
          </div>
          <div className="mt-[7px] flex gap-[6px]">
            <Btn s="添加" k="D" tail="..." className="h-[16px] w-[58px]" />
            <Btn s="删除" k="R" className="h-[16px] w-[58px] border-[#cac8bb] text-[#aca899]" />
          </div>
        </div>
        <div className="mt-[6px] flex justify-end gap-[6px]">
          <Btn s="确定" className="w-[58px]" />
          <Btn s="取消" className="w-[58px]" />
          <Btn s="应用" k="A" className="w-[58px]" />
        </div>
      </div>
    </div>
  );
}

function SelectUsersDialog() {
  return (
    <div className="absolute top-[335px] left-[633px] flex h-[200px] w-[366px] flex-col rounded-t-[6px] bg-[#0a46d8]">
      <TitleBar title="选择用户" buttons={["help", "close"]} active />
      <div className="mx-[3px] flex h-[174px] flex-col bg-[#ece9d8] pt-[7px] pl-[8px] leading-[13px]">
        <div className="h-[16px]">
          <T s="选择对象类型" k="S" />
          <T s=":" />
        </div>
        <div className="flex items-center gap-[5px]">
          <div className="h-[19px] w-[267px] border border-[#9db0c0] pl-px">
            <T s="用户或内置安全性原则" />
          </div>
          <Btn s="对象类型" k="O" tail="..." className="w-[70px]" />
        </div>
        <div className="mt-px h-[16px]">
          <T s="查找位置" k="F" />
          <T s=":" />
        </div>
        <div className="flex items-center gap-[5px]">
          <div className="h-[18px] w-[267px] border border-[#9db0c0] pl-px">
            <T s="20131101-1255" />
          </div>
          <Btn s="位置" k="L" tail="..." className="w-[70px]" />
        </div>
        <div className="mt-[5px] h-[16px]">
          <T s="输入对象名称来选择(" />
          <span className="text-[#0a1c9c] underline">示例</span>
          <T s=")" />
          <T s="" k="E" />
          <T s=":" />
        </div>
        <div className="flex gap-[5px]">
          <div className="h-[43px] w-[267px] border-t-2 border-l-2 border-[#82807a] bg-white pt-[1px] pl-px font-['Liberation_Sans'] text-[10.200px] text-[#214]">
            Guest
          </div>
          <Btn s="检查名称" k="C" className="w-[70px]" />
        </div>
        <div className="mt-[8px] flex">
          <Btn s="高级" k="A" tail="..." className="w-[71px]" />
          <Btn s="确定" className="ml-[149px] w-[58px] shadow-[inset_0_0_0_1px_#9ebef5]" />
          <Btn s="取消" className="ml-[6px] w-[58px]" />
          <svg viewBox="0 0 8 8" className="mt-[14px] ml-[1px] h-[8px] w-[8px]" stroke="#b0ab98" strokeDasharray="1.500 1.500" strokeWidth="1.500">
            <path d="M7 0v8M4 3v5M1 6v2" />
          </svg>
        </div>
      </div>
    </div>
  );
}

// red frames: left, top, width, height
const FRAMES = [
  [437, 125, 116, 51],
  [144, 306, 98, 38],
  [287, 362, 276, 19],
  [648, 271, 73, 32],
  [641, 453, 50, 24],
  [906, 453, 85, 25],
  [856, 502, 71, 26],
];

const ARROWS = [
  [435, 162, 247, 302],
  [250, 334, 420, 357],
  [509, 359, 647, 302],
  [720, 308, 675, 452],
  [693, 469, 909, 463],
  [907, 478, 880, 502],
];

function Annotations() {
  return (
    <svg viewBox="0 0 1000 535" className="absolute top-0 left-0 h-[535px] w-[1000px]">
      <defs>
        <marker id="head" markerUnits="userSpaceOnUse" markerWidth="9" markerHeight="8" refX="8.500" refY="4" orient="auto">
          <path d="M0 0.500L9 4 0 7.500z" fill="#f00" />
        </marker>
      </defs>
      {FRAMES.map(([x, y, w, h]) => (
        <rect key={`${x}-${y}`} x={x + 1} y={y + 1} width={w - 2} height={h - 2} fill="none" stroke="#f00" strokeWidth="2" />
      ))}
      {ARROWS.map(([x1, y1, x2, y2]) => (
        <line key={`${x1}-${y1}`} x1={x1} y1={y1} x2={x2} y2={y2} stroke="#f00" strokeWidth=".9" markerEnd="url(#head)" />
      ))}
    </svg>
  );
}

function Watermark() {
  return (
    <svg viewBox="0 0 190 90" className="absolute top-[425px] left-[763px] h-[90px] w-[190px] opacity-75">
      <g fill="#fbfbf9" stroke="#bdbbb4" strokeWidth="1">
        <ellipse cx="72.500" cy="25" rx="6.500" ry="9" />
        <ellipse cx="85" cy="13" rx="6.500" ry="9" />
        <ellipse cx="101" cy="14" rx="6.500" ry="8.500" />
        <ellipse cx="111.500" cy="28" rx="6.500" ry="8.500" />
        <path d="M91 27c9 0 12 8 19 13 8 6 5 20-5 20-6 0-8-1-14-1s-9 1-14 1c-11 0-13-14-5-20 7-5 10-13 19-13z" />
      </g>
      <g fill="#fbfbf9" stroke="#bdbbb4" strokeWidth="2" strokeLinejoin="round" paintOrder="stroke">
        <text x="5" y="58" textLength="55" lengthAdjust="spacingAndGlyphs" className="font-['Liberation_Sans'] text-[38px] font-bold">
          Bai
        </text>
        <text x="79" y="54" textLength="27" lengthAdjust="spacingAndGlyphs" className="font-['Liberation_Sans'] text-[22px] font-bold">
          du
        </text>
        <text x="124" y="56" textLength="58" className="font-['Noto_Sans_CJK_SC'] text-[29px] font-bold">
          经验
        </text>
        <text x="6" y="80" textLength="175" strokeWidth="1.300" className="font-['Noto_Sans'] text-[18.500px]">
          jingyan.baidu.com
        </text>
      </g>
    </svg>
  );
}

export default function App() {
  return (
    <div className={clsx("relative h-[535px] w-[1000px] overflow-hidden text-[9.450px] leading-[12px] text-black", CJK)}>
      <Browser />
      {/* sliver of the page that shows between the windows */}
      <div className="absolute top-[38px] left-[628px] h-[497px] w-[6px] bg-[#eef1f6]" />
      <AdminTools />
      <ComputerManagement />
      <UsersDialog />
      <SelectUsersDialog />
      <Annotations />
      <Watermark />
    </div>
  );
}
